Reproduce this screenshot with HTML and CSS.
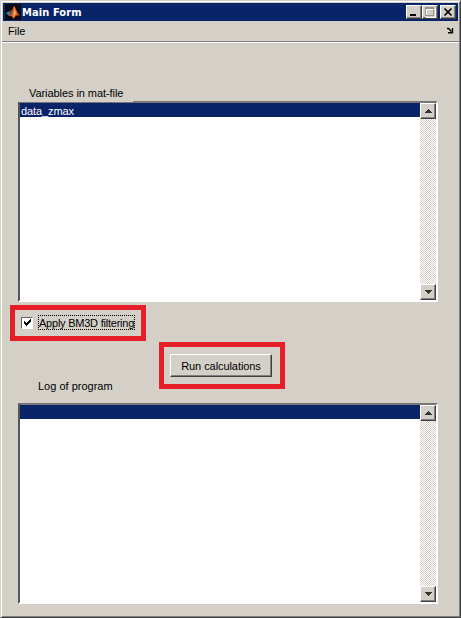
FILE: index.html
```html
<!DOCTYPE html>
<html lang="en">
<head>
<meta charset="utf-8">
<title>Main Form</title>
<link rel="stylesheet" href="styles.css">
</head>
<body>
<div class="window">
  <header class="titlebar">
    <svg class="logo" width="16" height="16" viewBox="0 0 16 16">
      <rect width="16" height="16" fill="#080b12"/>
      <path d="M1 9l4-2 2 2-3 3z" fill="#398a9e"/>
      <path d="M5 7l2-1 2-4 1 1-2 6-4 3z" fill="#784234"/>
      <path d="M9 2c1 0 3 7 6 10-2-1-3-1-4 0l-3 3c0-3-2-3-4-3 3-1 4-8 5-10z" fill="#d85a23"/>
      <path d="M9 3l2 6-3 5c0-3 1-6 1-11z" fill="#f3aa62"/>
    </svg>
    <h1 class="title">Main Form</h1>
    <div class="controls">
      <button class="control"><svg width="14" height="12" viewBox="0 0 14 12" shape-rendering="crispEdges"><path d="M3 8h6v2H3z" fill="#000"/></svg></button>
      <button class="control"><svg width="14" height="12" viewBox="0 0 14 12" shape-rendering="crispEdges"><path d="M3 3h9v8H3z" fill="none" stroke="#fff"/><path d="M2.500 1.500h8v8h-8zM2 2.500h9" fill="none" stroke="#96938b"/></svg></button>
      <button class="control close"><svg width="14" height="12" viewBox="0 0 14 12"><path d="M3.500 2.500l7 7m0-7l-7 7" stroke="#000" stroke-width="1.700"/></svg></button>
    </div>
  </header>
  <nav class="menubar">
    <span class="menu">File</span>
    <svg width="8" height="7" viewBox="0 0 8 7"><path d="M1 1.500h1.500L5.500 4.500M6.500 1v4.700H2" fill="none" stroke="#000" stroke-width="1.400"/></svg>
  </nav>
  <main class="form">
    <div class="label variables">Variables in mat-file</div>
    <section class="listbox top">
      <div class="items"><div class="item">data_zmax</div></div>
      <div class="scrollbar">
        <div class="arrow"><svg width="7" height="4" viewBox="0 0 7 4" shape-rendering="crispEdges"><path d="M3 0h1v1h1v1h1v1h1v1H0V3h1V2h1V1h1z" fill="#333"/></svg></div>
        <div class="arrow"><svg width="7" height="4" viewBox="0 0 7 4" shape-rendering="crispEdges"><path d="M0 0h7v1H6v1H5v1H4v1H3V3H2V2H1V1H0z" fill="#333"/></svg></div>
      </div>
    </section>
    <div class="highlight filter">
      <span class="checkbox"><svg width="9" height="9" viewBox="0 0 9 9" shape-rendering="crispEdges"><path d="M1 3h1v1h1v1h1V4h1V3h1V2h1V1h1v3H7v1H6v1H5v1H4v1H3V7H2V6H1z" fill="#000"/></svg></span>
      <span class="focus">Apply BM3D filtering</span>
    </div>
    <div class="highlight run"><button class="push">Run calculations</button></div>
    <div class="label log">Log of program</div>
    <section class="listbox">
      <div class="items"><div class="item"></div></div>
      <div class="scrollbar">
        <div class="arrow"><svg width="7" height="4" viewBox="0 0 7 4" shape-rendering="crispEdges"><path d="M3 0h1v1h1v1h1v1h1v1H0V3h1V2h1V1h1z" fill="#333"/></svg></div>
        <div class="arrow"><svg width="7" height="4" viewBox="0 0 7 4" shape-rendering="crispEdges"><path d="M0 0h7v1H6v1H5v1H4v1H3V3H2V2H1V1H0z" fill="#333"/></svg></div>
      </div>
    </section>
  </main>
</div>
</body>
</html>
```
FILE: styles.css
```css
* { box-sizing: border-box; }
body {
  margin: 0;
  overflow: hidden;
  background: #d4d0c8;
  color: #000;
  font: 11px/14px "Liberation Sans", Arial, sans-serif;
}
svg { display: block; }
button { font: inherit; color: inherit; padding: 0; border-radius: 0; }
.window {
  height: 618px;
  padding: 1px;
  border: 1px solid;
  border-color: #d4d0c8 #404040 #404040 #d4d0c8;
  box-shadow: inset 1px 1px #fff, inset -1px -1px #808080;
}
.titlebar {
  display: flex;
  align-items: center;
  height: 18px;
  margin: 1px 1px 0;
  padding: 0 2px;
  background: #0a246a;
}
.title {
  margin: 1px 0 0 1px;
  color: #fff;
  font: bold 11px/16px "DejaVu Sans Condensed", "DejaVu Sans", sans-serif;
  font-stretch: condensed;
  letter-spacing: 0.1px;
}
.controls { display: flex; margin-left: auto; }
.control {
  width: 16px;
  height: 14px;
  background: #d4d0c8;
  border: 1px solid;
  border-color: #fff #404040 #404040 #fff;
  box-shadow: inset -1px -1px #808080;
}
.close { margin-left: 2px; }
.menubar {
  display: flex;
  align-items: center;
  justify-content: space-between;
  height: 22px;
  padding: 0 5px 2px 6px;
  border-bottom: 1px solid #fff;
  box-shadow: inset 0 -1px #808080;
}
.menu { letter-spacing: -0.1px; }
.form { padding: 43px 21px 0 16px; }
.label { height: 14px; }
.variables {
  position: relative;
  width: 115px;
  height: 16px;
  margin: 0 0 -1px;
  padding-left: 11px;
  background: #d4d0c8;
  white-space: nowrap;
  letter-spacing: -0.07px;
}
.listbox {
  display: flex;
  width: 420px;
  height: 201px;
  border: 2px solid;
  border-color: #777 #fff #fff #555;
  background: #fff;
}
.items { flex: 1; }
.item { height: 14px; padding: 1px 0 0 1px; background: #0a246a; color: #fff; letter-spacing: -0.1px; }
.scrollbar {
  display: flex;
  flex-direction: column;
  justify-content: space-between;
  width: 16px;
  background: repeating-conic-gradient(#d4d0c8 0 25%, #fff 0 50%) 0 0 / 2px 2px;
}
.arrow {
  display: grid;
  place-items: center;
  height: 16px;
  background: #d4d0c8;
  border: 1px solid;
  border-color: #fff #404040 #404040 #fff;
  box-shadow: inset -1px -1px #808080;
}
.highlight { display: flex; border: 5px solid #e51e27; }
.filter {
  align-items: center;
  width: 136px;
  height: 36px;
  margin: 3px 0 0 -8px;
  padding: 0 0 1px 6px;
}
.checkbox {
  display: grid;
  place-items: center;
  width: 12px;
  height: 12px;
  background: #fff;
  border: 1px solid;
  border-color: #666 #fff #fff #666;
}
.focus {
  width: 97px;
  height: 15px;
  margin-left: 5px;
  border: 1px dotted #000;
  line-height: 15px;
  white-space: nowrap;
  letter-spacing: -0.23px;
}
.run {
  width: 126px;
  height: 47px;
  margin: 1px 0 0 141px;
  padding: 7px 6px;
}
.push {
  width: 102px;
  height: 23px;
  background: #d4d0c8;
  border: 1px solid;
  border-color: #fff #404040 #404040 #fff;
  box-shadow: inset -1px -1px #808080;
  letter-spacing: -0.07px;
}
.log { margin: -10px 0 10px 20px; }
```
